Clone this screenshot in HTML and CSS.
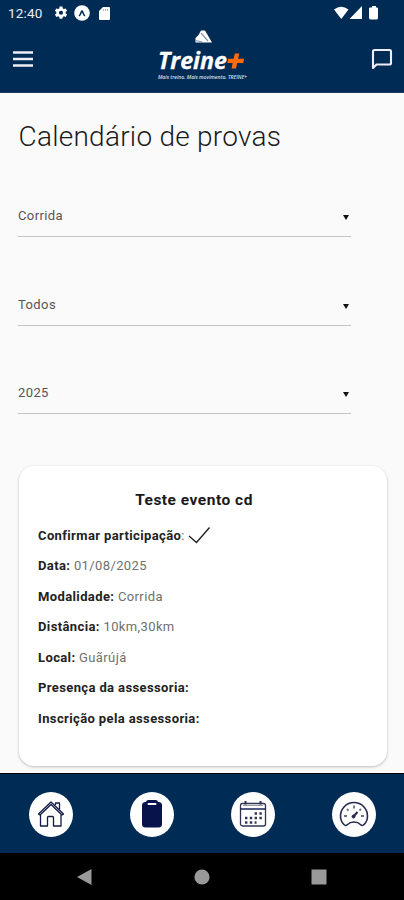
FILE: index.html
```html
<!DOCTYPE html>
<html lang="pt-BR">
<head>
    <meta charset="UTF-8">
    <meta name="viewport" content="width=device-width, initial-scale=1.0">
    <title>Treine+</title>
    <link rel="stylesheet" href="styles.css">
</head>
<body>
    <header class="topo">
        <div class="status">
            <span class="hora">12:40</span>
            <svg class="engrenagem" width="14" height="14" viewBox="0 0 24 24"><path fill="#fff" fill-rule="evenodd" d="M9.600 1h4.800l.6 3.200 2 1.100 3-1.200 2.400 4.200-2.400 2v2.400l2.400 2-2.400 4.200-3-1.200-2 1.100-.6 3.200H9.600l-.6-3.200-2-1.100-3 1.200-2.400-4.200 2.400-2v-2.400l-2.400-2L4 4.100l3 1.200 2-1.100zM12 8a3.600 3.600 0 1 0 0 7.200A3.600 3.600 0 1 0 12 8z"/></svg>
            <svg class="expo" width="16" height="16" viewBox="0 0 16 16"><circle cx="8" cy="8" r="7.800" fill="#fff"/><path d="M5.500 10.500C6.800 9.300 7 6.500 8 6c1 .5 1.200 3.300 2.500 4.500" fill="none" stroke="#002b55" stroke-width="1.500" stroke-linecap="round"/></svg>
            <svg class="cartao" width="11" height="13" viewBox="0 0 11 13"><path d="M4 0h6q1 0 1 1v11q0 1-1 1H1q-1 0-1-1V4z" fill="#fff"/><path d="M4.500 2v2M6.500 2v2M8.500 2v2" stroke="#8fa3b8" stroke-width=".8"/></svg>
            <svg class="sinais" width="46" height="14" viewBox="0 0 46 14"><path d="M0 3.500Q7 -2 14.500 3.500L7.300 13zM28 0v13H15.500z" fill="#fff"/><path d="M36 1.500h2V0h4v1.500h1q1 0 1 1V12q0 1.500-1.500 1.500h-5Q35 13.500 35 12V2.500q0-1 1-1z" fill="#fff"/></svg>
        </div>
        <div class="barra">
            <svg width="20" height="16" viewBox="0 0 20 16"><path d="M0 1.500h20M0 8h20M0 14.500h20" stroke="#f0eef4" stroke-width="2.400"/></svg>
            <svg class="logo" width="94" height="56" viewBox="0 0 94 56">
                <path d="M40.500 11.500V7l3-3L46-.5h4l7 12z" fill="#fff"/>
                <path d="M40.500 9.500l7 1.500M46 2l7 8" stroke="#8497ad" stroke-width="1.200"/>
                <text class="logo-nome" x="3" y="38" textLength="69" lengthAdjust="spacingAndGlyphs">Treine</text>
                <path d="M84.300 22.500l-1.200 5.300h6l-.9 4.300h-6L81 37.500h-4.500l1.200-5.400h-5.400l.9-4.300h5.400l1.200-5.300z" fill="#ff6b0b"/>
                <text class="logo-lema" x="3" y="48" textLength="89" lengthAdjust="spacingAndGlyphs">Mais treino. Mais movimento. TREINE+</text>
            </svg>
            <svg width="22" height="22" viewBox="0 0 22 22"><path d="M2 20V3.500Q2 2 3.500 2h15Q20 2 20 3.500V15q0 1.500-1.500 1.500H5.500z" fill="none" stroke="#f0eef8" stroke-width="2.100" stroke-linejoin="round"/></svg>
        </div>
    </header>

    <main class="conteudo">
        <h1>Calendário de provas</h1>
        <div class="filtros">
            <div class="filtro"><span>Corrida</span><i class="seta"></i></div>
            <div class="filtro"><span>Todos</span><i class="seta"></i></div>
            <div class="filtro"><span>2025</span><i class="seta"></i></div>
        </div>
        <section class="card">
            <h2>Teste evento cd</h2>
            <p><b>Confirmar participação</b>: <svg class="check" width="23" height="18" viewBox="0 0 23 18"><path d="M1 10l7.500 6.500L21.500 1.500" fill="none" stroke="#222" stroke-width="1.400"/></svg></p>
            <p><b>Data:</b> 01/08/2025</p>
            <p><b>Modalidade:</b> Corrida</p>
            <p><b>Distância:</b> 10km,30km</p>
            <p><b>Local:</b> Guãrújá</p>
            <p><b>Presença da assessoria:</b></p>
            <p><b>Inscrição pela assessoria:</b></p>
        </section>
    </main>

    <nav class="menu">
        <a class="item">
            <svg width="28" height="28" viewBox="0 0 28 28" fill="none" stroke="#111b45" stroke-width="1.300" stroke-linejoin="round"><path d="M3.500 14.500V26h7v-8.500q0-1 1-1h4q1 0 1 1V26H24V14.500"/><path d="M1.500 14L14 2l12.500 12-1.500 1L14 4.500 3 15z"/><path d="M18.500 5V3h4v6.500"/></svg>
        </a>
        <a class="item">
            <svg width="20" height="28" viewBox="0 0 20 28"><rect y="2" width="20" height="25.500" rx="3.500" fill="#07134a"/><rect x="4" y="0" width="12" height="5" rx="2.500" fill="#07134a"/><rect x="5.500" y="3" width="9" height="2" rx="1" fill="#fff"/></svg>
        </a>
        <a class="item">
            <svg width="28" height="28" viewBox="0 0 28 28" fill="none" stroke="#303452"><rect x="1.500" y="3.500" width="25" height="22.500" rx="2" stroke-width="1.300"/><path d="M1.500 9h25" stroke="#07134a" stroke-width="1.400"/><path d="M4 5.500h20" stroke="#999" stroke-width="1"/><path d="M6.500 1v3.500M21.500 1v3.500" stroke-width="2"/><path d="M15.600 13.500h8M6 18h17M6 22.500h11.500" stroke-width="2.400" stroke-dasharray="2.400 2.400"/></svg>
        </a>
        <a class="item">
            <svg width="30" height="28" viewBox="0 0 30 28" fill="none" stroke="#252a50"><path d="M5.500 25C2.500 22.500 1.500 19 1.500 16A13.500 13.500 0 0 1 28.500 16c0 3-1 6.500-4 9-1 .8-2 .5-2.700-.3-3.700-3.600-9.900-3.600-13.600 0-.7.8-1.700 1.100-2.700.3z" stroke-width="1.600"/><path d="M14.500 16.500l4-4.500" stroke-width="2"/><circle cx="14.500" cy="16.500" r="1.500" fill="#252a50"/><path d="M15 5.500v3M8 9l1.500 1.700M22 9l-1.500 1.700M5 16h3M25 16h-3" stroke="#6d718d" stroke-width="1.900"/></svg>
        </a>
    </nav>

    <footer class="sistema">
        <svg width="250" height="18" viewBox="0 0 250 18" fill="#999"><path d="M0 9L14.500 1v16z"/><circle cx="125" cy="9" r="7.600"/><rect x="234.500" y="1.500" width="15" height="15"/></svg>
    </footer>
</body>
</html>
```
FILE: styles.css
```css
* {
    box-sizing: border-box;
}

body {
    margin: 0;
    height: 900px;
    display: flex;
    flex-direction: column;
    overflow: hidden;
    background: #fafafa;
    color: #1a1a1a;
    font-family: Roboto, "Liberation Sans", sans-serif;
}

svg {
    display: block;
    flex: none;
}

.topo {
    height: 93px;
    background: #002b55;
    border-bottom: 1px solid #173b5f;
    flex: none;
}

.status {
    height: 25px;
    padding: 1px 24px 0 8px;
    display: flex;
    align-items: center;
}

.hora {
    color: #e9eef4;
    font-size: 13.500px;
    letter-spacing: .2px;
    width: 46px;
}

.expo {
    margin-left: 6px;
}

.cartao {
    margin-left: 9px;
}

.sinais {
    margin-left: auto;
}

.barra {
    height: 67px;
    padding: 0 11px 0 13px;
    display: flex;
    justify-content: space-between;
    align-items: center;
}

.logo {
    overflow: visible;
}

.logo-nome {
    font: italic 700 22.500px "Open Sans", "Noto Sans", sans-serif;
    fill: #fff;
    stroke: #fff;
    stroke-width: .3px;
}

.logo-lema {
    font: italic 600 5px "Open Sans", "Noto Sans", sans-serif;
    fill: #d8e0e9;
}

.conteudo {
    flex: 1;
    padding: 27px 17px 0 18px;
}

h1 {
    margin: 0 0 0 .5px;
    font-size: 28px;
    line-height: 34px;
    font-weight: 350;
    letter-spacing: .25px;
}

.filtros {
    width: 333px;
    padding-top: 41px;
}

.filtro {
    height: 42px;
    margin-bottom: 46.500px;
    border-bottom: 1px solid #c4c4c4;
    display: flex;
    justify-content: space-between;
    align-items: center;
    padding-right: 2px;
    font-size: 13px;
    letter-spacing: .4px;
    color: #555;
}

.seta {
    border: 3px solid transparent;
    border-top: 5px solid #111;
    border-bottom: 0;
    margin-top: 4px;
}

.card {
    height: 300px;
    margin: 52px 0 0 1px;
    padding: 22px 19px;
    background: #fff;
    border-radius: 15px;
    box-shadow: 0 1px 3px rgba(0, 0, 0, .25);
}

h2 {
    margin: 0 0 8px;
    padding-right: 18px;
    font-size: 15.500px;
    line-height: 24px;
    letter-spacing: .5px;
    text-align: center;
}

.card p {
    margin: 0;
    height: 30.500px;
    display: flex;
    align-items: center;
    white-space: pre;
    font-size: 13px;
    letter-spacing: .38px;
    color: #707070;
}

.card b {
    color: #222;
}

.menu {
    height: 80px;
    flex: none;
    padding: 1px 28px 0 29px;
    border-top: 1px solid #000;
    background: #002b55;
    display: flex;
    justify-content: space-between;
    align-items: center;
}

.item {
    width: 44px;
    height: 45px;
    border-radius: 50%;
    background: #fff;
    display: flex;
    align-items: center;
    justify-content: center;
}

.sistema {
    height: 47px;
    flex: none;
    background: #000;
    display: flex;
    align-items: center;
    justify-content: center;
}
```
